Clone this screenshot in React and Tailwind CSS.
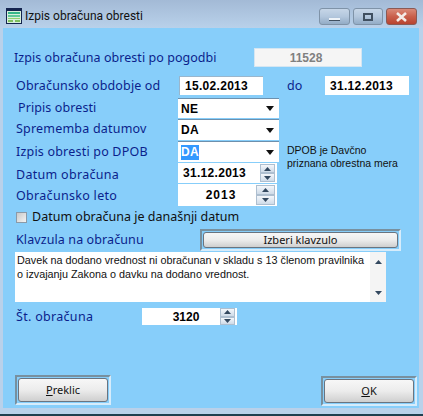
import React from 'react';

const Label = ({ children, w = 'w-[175px]', pl = 'pl-[13px]', pt = 'pt-0', tr = 'tracking-[0.1px]' }) => (
    <div className={`${w} ${pl} ${pt} ${tr} shrink-0 text-[12.5px] leading-none text-[#0b1f8c] whitespace-nowrap`}>{children}</div>
);

const Arrow = ({ up, className = '' }) => (
    <svg width="7" height="4" viewBox="0 0 7 4" className={className}>
        <path d={up ? 'M3.5 0L7 4H0Z' : 'M0 0H7L3.5 4Z'} fill="#33485f" />
    </svg>
);

const Spin = ({ w = 'w-[15px]' }) => (
    <div className={`${w} h-full flex flex-col shrink-0`}>
        <div className="flex-1 flex items-center justify-center border border-[#aebfd0] bg-gradient-to-b from-[#f4f7fb] to-[#cfdbe8]"><Arrow up /></div>
        <div className="flex-1 flex items-center justify-center border border-[#aebfd0] bg-gradient-to-b from-[#f4f7fb] to-[#cfdbe8]"><Arrow /></div>
    </div>
);

const Select = ({ children }) => (
    <div className="w-[101px] h-full bg-white border-t border-[#6d90ad] flex items-center justify-between pl-[3px] pr-[5px] text-[12px] font-bold font-['Liberation_Sans',sans-serif] tracking-[0.3px] text-black">
        {children}
        <svg width="8" height="5" viewBox="0 0 8 5"><path d="M0 0H8L4 5Z" fill="#111" /></svg>
    </div>
);

const FrameButton = ({ children, outer, inner }) => (
    <div className={`${outer} p-[1px] border-2 border-[#78909f] border-r-[#d6ecfb] border-b-[#d6ecfb]`}>
        <div className={`${inner} h-full rounded-[3px] border border-[#6a7480] bg-gradient-to-b from-[#f7f7f7] via-[#ececec] to-[#cfcfcf] flex items-center justify-center text-[11px] text-[#111]`}>
            {children}
        </div>
    </div>
);

const WinBtn = ({ children, w, close }) => (
    <div className={`${w} h-[17px] rounded-[3px] border flex items-center justify-center ${close ? 'border-[#8a5a55] bg-gradient-to-b from-[#d98a78] via-[#c9604c] to-[#b8432f]' : 'border-[#7f93a8] bg-gradient-to-b from-[#c6d6e8] via-[#b3c7dd] to-[#93acc6]'}`}>
        {children}
    </div>
);

const App = () => {
    return (
        <div className="w-[423px] h-[416px] bg-[#b9d1ea] flex flex-col overflow-hidden font-['Noto_Sans',sans-serif]">
            {/* title bar */}
            <div className="h-[28px] shrink-0 flex items-start bg-gradient-to-b from-[#a3bad6] to-[#b9d1ea]">
                <svg width="16" height="16" viewBox="0 0 16 16" className="ml-[6px] mt-[8px] shrink-0">
                    <rect x="0" y="0" width="16" height="16" fill="#14244f" />
                    <rect x="1" y="3" width="14" height="12" fill="#d8f0dc" />
                    <rect x="2" y="4" width="12" height="2" fill="#35b58a" />
                    <rect x="2" y="7" width="12" height="2" fill="#5fc79a" />
                    <rect x="2" y="10" width="12" height="1" fill="#8fd06f" />
                    <rect x="2" y="12" width="5" height="2" fill="#7fbf5f" />
                    <rect x="9" y="12" width="5" height="2" fill="#7fbf5f" />
                </svg>
                <div className="ml-[3px] mt-[8px] text-[12px] leading-[16px] text-[#111] font-['Roboto',sans-serif]">Izpis obračuna obresti</div>
                <div className="ml-auto mr-[6px] mt-[8px] flex gap-[3px]">
                    <WinBtn w="w-[31px]"><div className="mt-[5px] w-[11px] h-[3px] bg-[#eef3f8] border-b border-[#3f4f60]" /></WinBtn>
                    <WinBtn w="w-[30px]"><div className="w-[10px] h-[8px] border-2 border-[#3f4f60]" /></WinBtn>
                    <WinBtn w="w-[31px]" close>
                        <svg width="13" height="10" viewBox="0 0 13 10"><path d="M2 1L11 9M11 1L2 9" stroke="#f4ece8" strokeWidth="2.6" /></svg>
                    </WinBtn>
                </div>
            </div>

            {/* client area */}
            <div className="mx-[3px] w-[416px] h-[380px] shrink-0 bg-[#87cefa] pt-[20px] flex flex-col">
                <div className="h-[19px] flex items-center">
                    <Label w="w-[251px]" pl="pl-[11px]" pt="pt-[2px]" tr="tracking-[0.05px]">Izpis obračuna obresti po pogodbi</Label>
                    <div className="w-[108px] h-full bg-[#f5f5f5] border border-[#d5e6f2] flex items-center justify-center pr-[4px] text-[12px] font-bold font-['Liberation_Sans',sans-serif] text-[#808080]">11528</div>
                </div>
                <div className="h-[19px] mt-[9px] flex items-center">
                    <Label w="w-[176px]" pt="pt-[2px]" tr="tracking-[0.15px]">Obračunsko obdobje od</Label>
                    <div className="w-[84px] h-full bg-white border-t border-l border-[#9ab6cc] pl-[5px] flex items-center text-[12px] font-bold font-['Liberation_Sans',sans-serif] tracking-[0.3px] text-black">15.02.2013</div>
                    <div className="ml-[24px] w-[38px] text-[12.5px] leading-none text-[#0b1f8c] pt-[2px]">do</div>
                    <div className="w-[84px] h-full bg-white pl-[5px] flex items-center text-[12px] font-bold font-['Liberation_Sans',sans-serif] tracking-[0.3px] text-black">31.12.2013</div>
                </div>
                <div className="h-[20px] mt-[3px] flex items-center">
                    <Label pl="pl-[15px]">Pripis obresti</Label>
                    <Select>NE</Select>
                </div>
                <div className="h-[21px] mt-[1px] flex items-center">
                    <Label tr="tracking-[0.2px]">Sprememba datumov</Label>
                    <Select>DA</Select>
                </div>
                <div className="h-[21px] mt-[1px] flex items-center relative">
                    <Label pt="pt-[1px]" tr="tracking-[0.2px]">Izpis obresti po DPOB</Label>
                    <div className="w-[101px] h-full bg-white border-t border-[#6d90ad] flex items-center justify-between pl-[3px] pr-[5px] text-[12px] font-bold font-['Liberation_Sans',sans-serif] tracking-[0.3px]">
                        <span className="bg-[#3399ff] text-white px-0 leading-[15px]">DA</span>
                        <svg width="8" height="5" viewBox="0 0 8 5"><path d="M0 0H8L4 5Z" fill="#111" /></svg>
                    </div>
                    <div className="absolute left-[284px] top-[3px] text-[10.5px] leading-[13px] text-[#111] font-['Liberation_Sans',sans-serif] whitespace-nowrap">DPOB je Davčno<br />priznana obrestna mera</div>
                </div>
                <div className="h-[20px] mt-[1px] flex items-center">
                    <Label pt="pt-[4px]" tr="tracking-[0.3px]">Datum obračuna</Label>
                    <div className="w-[99px] h-full bg-white flex items-center pl-[5px] pr-[2px] py-[1px] text-[12px] font-bold font-['Liberation_Sans',sans-serif] tracking-[0.3px] text-black">
                        <span className="flex-1">31.12.2013</span>
                        <Spin />
                    </div>
                </div>
                <div className="h-[22px] mt-[1px] flex items-center">
                    <Label pt="pt-[2px]" tr="tracking-[0.3px]">Obračunsko leto</Label>
                    <div className="w-[99px] h-full bg-white flex items-center pr-[2px] py-[1px] text-[12px] font-bold font-['Liberation_Sans',sans-serif] tracking-[1px] text-black">
                        <span className="flex-1 text-center pl-[8px]">2013</span>
                        <Spin w="w-[19px]" />
                    </div>
                </div>
                <div className="h-[12px] mt-[5px] flex items-center pl-[13px]">
                    <div className="w-[11px] h-[11px] bg-gradient-to-br from-[#c9c9c9] to-[#f4f4f4] border border-[#8b9aa8] shrink-0" />
                    <div className="ml-[5px] text-[12.5px] leading-none text-[#111] whitespace-nowrap">Datum obračuna je današnji datum</div>
                </div>
                <div className="h-[22px] mt-[6px] flex items-center">
                    <Label w="w-[197px]">Klavzula na obračunu</Label>
                    <FrameButton outer="w-[201px] h-full" inner="w-full">Izberi klavzulo</FrameButton>
                </div>
                <div className="h-[50px] mt-[1px] ml-[12px] w-[371px] bg-white flex">
                    <div className="flex-1 pl-[2px] pt-[1px] text-[10.8px] leading-[14px] text-[#111] font-['Liberation_Sans',sans-serif] whitespace-nowrap">
                        Davek na dodano vrednost ni obračunan v skladu s 13 členom pravilnika<br />o izvajanju Zakona o davku na dodano vrednost.
                    </div>
                    <div className="w-[16px] shrink-0 bg-[#f4f4f4] flex flex-col items-center justify-between pt-[8px] pb-[7px]">
                        <Arrow up />
                        <Arrow />
                    </div>
                </div>
                <div className="h-[17px] mt-[6px] flex items-center">
                    <Label w="w-[139px]" pt="pt-[1px]" tr="tracking-[0.3px]">Št. obračuna</Label>
                    <div className="w-[95px] h-full bg-white flex items-center pr-[2px] text-[12px] font-bold font-['Liberation_Sans',sans-serif] text-black">
                        <span className="flex-1 text-center pl-[10px]">3120</span>
                        <Spin />
                    </div>
                </div>
                <div className="mt-[50px] pl-[12px] pr-[2px] flex items-start justify-between">
                    <FrameButton outer="w-[96px] h-[30px]" inner="w-full"><span><u>P</u>reklic</span></FrameButton>
                    <div className="pt-[1px]">
                        <FrameButton outer="w-[96px] h-[30px]" inner="w-full"><span><u>O</u>K</span></FrameButton>
                    </div>
                </div>
            </div>
            <div className="mt-[6px] h-[2px] shrink-0 bg-[#1f3f4f]" />
        </div>
    );
};

export default App;
